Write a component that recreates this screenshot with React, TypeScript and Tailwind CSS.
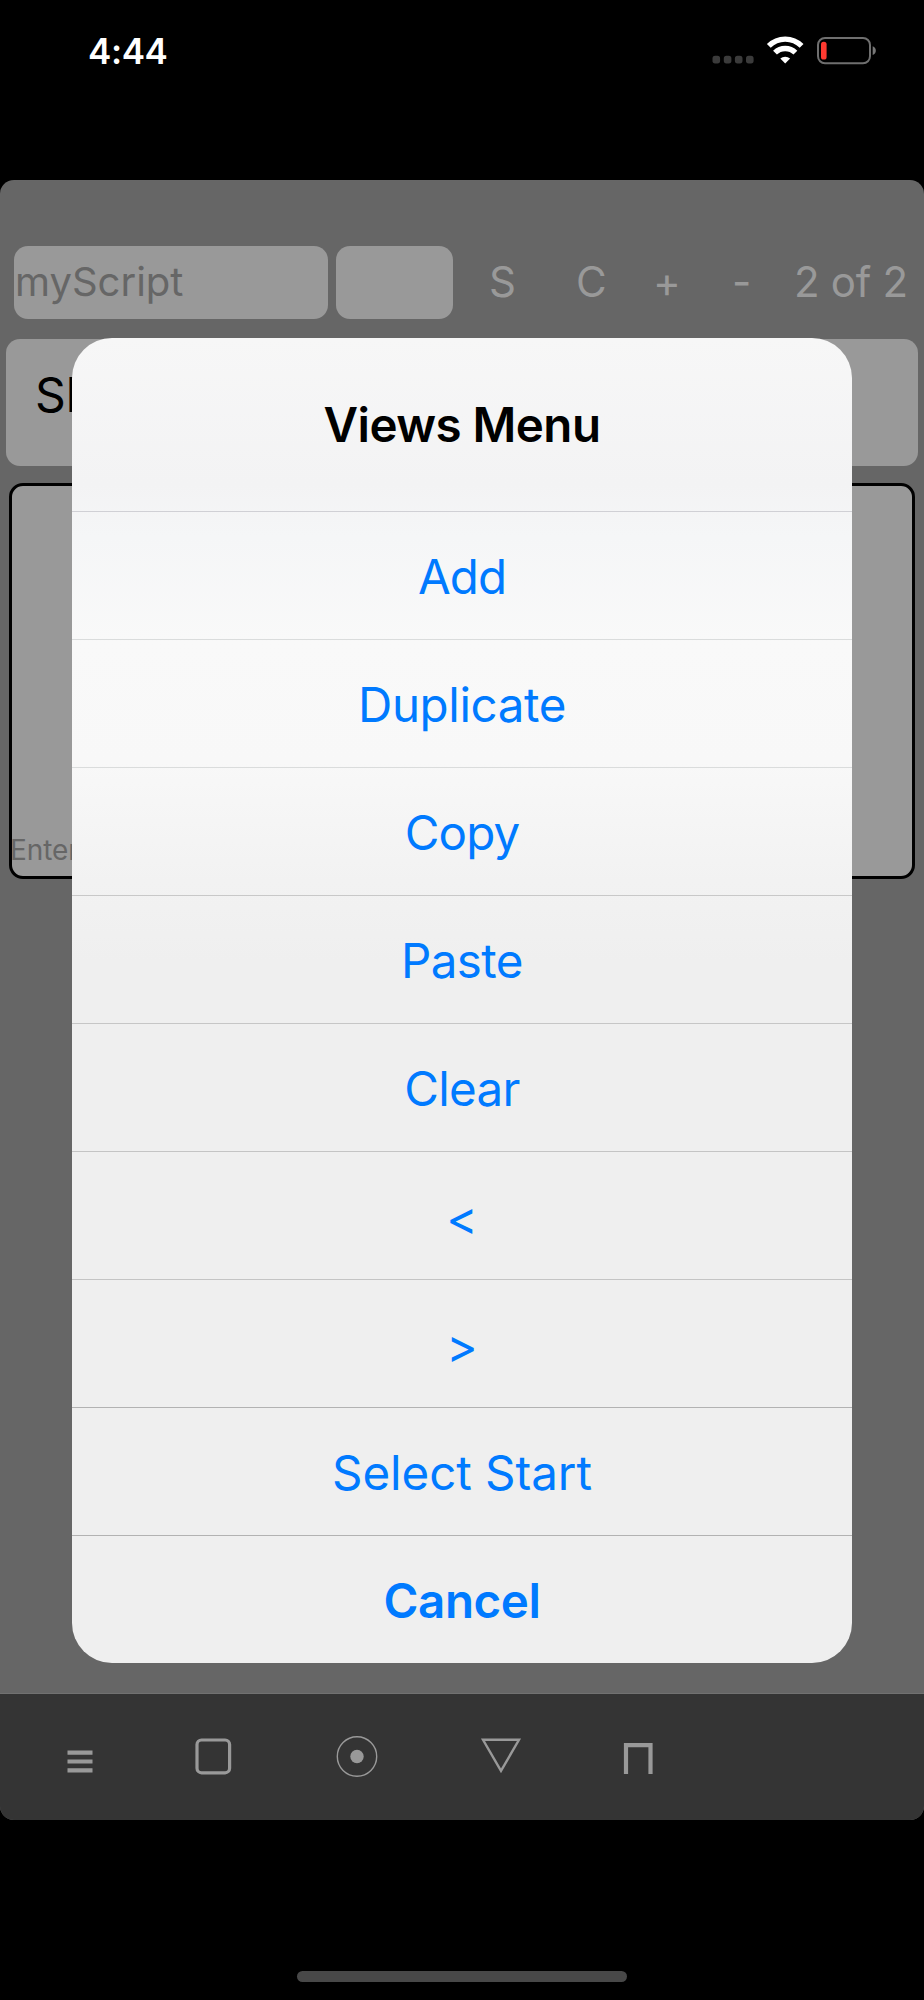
import clsx from 'clsx';

const actions = [
  { label: 'Add', text: 'tracking-[-0.9px]', line: 'border-[#d0d0d5]' },
  { label: 'Duplicate', text: 'tracking-[-0.4px]', line: 'border-[#dadcdc]' },
  { label: 'Copy', text: 'tracking-[-0.9px]', line: 'border-[#dadcdc]' },
  { label: 'Paste', text: 'tracking-[-0.6px]', line: 'border-[#c8c8c8]' },
  { label: 'Clear', text: 'tracking-[-0.7px]', line: 'border-[#c6c6c6]' },
  { label: '<', text: 'text-[42px] pt-[2px]', line: 'border-[#c4c4c4]' },
  { label: '>', text: 'text-[42px] pt-[2px]', line: 'border-[#c4c4c4]' },
  { label: 'Select Start', text: 'tracking-[-0.05px]', line: 'border-[#b2b2b2]' },
  { label: 'Cancel', text: 'font-semibold tracking-[-0.4px]', line: 'border-[#b2b2b2]' },
];

function StatusBar() {
  return (
    <div className="flex h-[180px] justify-between pt-[30px] pr-[36px] pl-[88px]">
      <span className="h-[42px] text-[35px] leading-[42px] font-semibold tracking-[-0.4px] text-white">4:44</span>
      <svg className="h-[42px] w-[176px]" viewBox="0 0 176 42">
        <g fill="#3b3b3b">
          <rect x="-1" y="25.8" width="7.6" height="7.6" rx="2.6" transform="translate(1.5 0)" />
          <rect x="11.8" y="25.8" width="7.6" height="7.6" rx="2.6" />
          <rect x="22.9" y="25.8" width="7.6" height="7.6" rx="2.6" />
          <rect x="34" y="25.8" width="7.6" height="7.6" rx="2.6" />
        </g>
        <g fill="none" stroke="#fff" strokeWidth="5.4">
          <path d="M56.8 15.9a23.2 23.2 0 0 1 32.8 0" />
          <path d="M63 22.7a14.4 14.4 0 0 1 20.4 0" />
        </g>
        <path d="M73.2 33.5l-4.9-4.9a7.2 7.2 0 0 1 9.8 0z" fill="#fff" />
        <rect x="106" y="8" width="52" height="25.3" rx="7" fill="none" stroke="#6f6f6f" strokeWidth="2" />
        <rect x="109" y="11.7" width="5.6" height="17.8" rx="2.6" fill="#ff3a30" />
        <path d="M160.7 16.3c4.2 1.6 4.2 7.2 0 8.8z" fill="#777" />
      </svg>
    </div>
  );
}

function Toolbar() {
  return (
    <div className="mt-[66px] ml-[14px] flex h-[73px] items-center text-[42px] leading-[71px] text-[#999]">
      <div className="h-[73px] w-[314px] rounded-[14px] bg-[#999] pl-[1px] text-[40px] text-[#666]">myScript</div>
      <div className="ml-[8px] h-[73px] w-[117px] rounded-[14px] bg-[#999]" />
      <span className="ml-[36px] w-[87px] pb-[2px]">S</span>
      <span className="w-[77px] pb-[2px]">C</span>
      <span className="w-[79px] pb-[2px]">+</span>
      <span className="w-[62px] pb-[2px]">-</span>
      <span className="pb-[2px] tracking-[-0.3px] whitespace-nowrap">2 of 2</span>
    </div>
  );
}

function BottomBar() {
  return (
    <div className="h-[127px] border-t border-[#717171] bg-[#343434]">
      <svg className="h-[126px] w-[924px]" viewBox="0 1694 924 126" fill="none" stroke="#999">
        <path d="M67.5 1752.6h25M67.5 1761.5h25M67.5 1770.4h25" strokeWidth="4.2" />
        <rect x="197" y="1740" width="32.6" height="32.8" rx="4.5" strokeWidth="3.2" />
        <circle cx="357" cy="1756.5" r="19.7" strokeWidth="1.4" />
        <circle cx="357" cy="1756.5" r="6.7" fill="#999" stroke="none" />
        <path d="M483 1739.8h36l-18 31z" strokeWidth="2.4" />
        <path d="M626 1774v-28.9h24.5v28.9" strokeWidth="4.2" />
      </svg>
    </div>
  );
}

function ViewsMenu() {
  return (
    <div className="absolute top-[338px] left-[72px] w-[780px] overflow-hidden rounded-[40px] bg-[linear-gradient(180deg,#f7f7f7_0%,#f3f3f4_11%,#f5f6f7_15%,#f9f9f9_23%,#f8f8f8_32%,#f2f2f2_41%,#efefef_47%,#efefef_100%)]">
      <h2 className="h-[173px] text-center text-[47.5px] leading-[173px] font-semibold tracking-[-0.55px] text-black">
        Views Menu
      </h2>
      {actions.map(item => (
        <button
          key={item.label}
          className={clsx(
            'block h-[128px] w-full border-t pt-[1px] text-center text-[47.5px] leading-[127px] text-[#007aff]',
            item.text,
            item.line
          )}
        >
          {item.label}
        </button>
      ))}
    </div>
  );
}

export default function App() {
  return (
    <div className="relative h-[2000px] w-[924px] overflow-hidden bg-black font-['Inter',sans-serif]">
      <StatusBar />
      <div className="flex h-[1640px] flex-col overflow-hidden rounded-[14px] bg-[#666]">
        <Toolbar />
        <div className="mx-[6px] mt-[20px] h-[127px] rounded-[14px] bg-[#999] pt-[27px] pl-[29px] text-[48px] leading-[58px] text-black">
          Sh
        </div>
        <div className="mx-[9px] mt-[17px] flex h-[396px] items-end rounded-[14px] border-[3px] border-black bg-[#999] pb-[9px] text-[28px] leading-[34px] text-[#666]">
          <span className="-ml-[2px] tracking-[-0.1px]">Enter</span>
        </div>
        <div className="flex-1" />
        <BottomBar />
      </div>
      <div className="mx-auto mt-[151px] h-[11px] w-[330px] rounded-full bg-[#484848]" />
      <ViewsMenu />
    </div>
  );
}
